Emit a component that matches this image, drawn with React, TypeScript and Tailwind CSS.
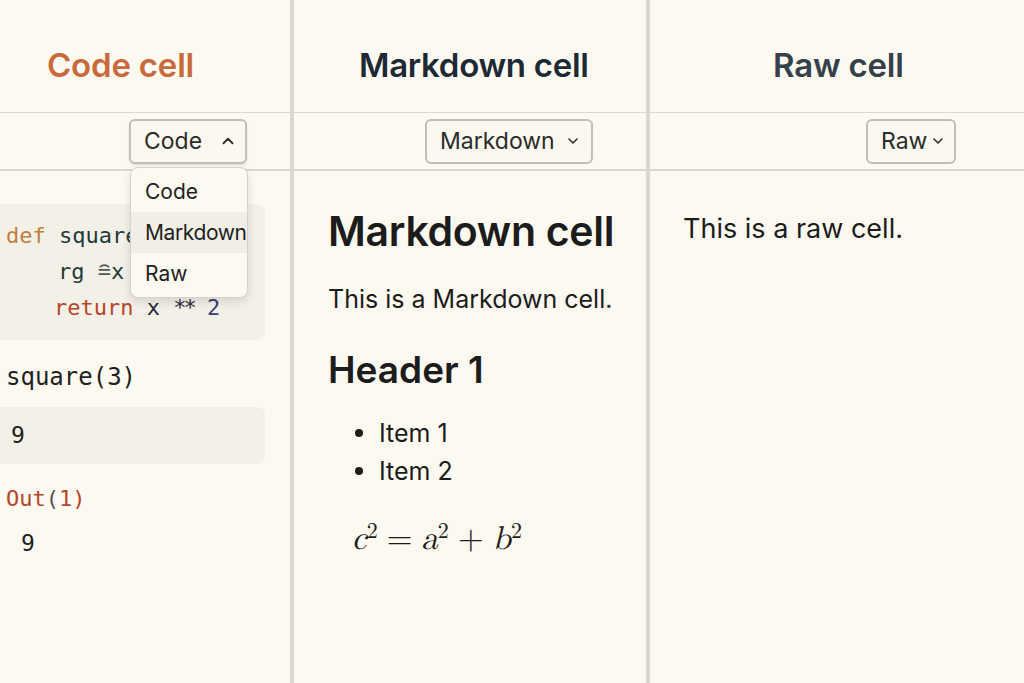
import { ChevronDown, ChevronUp } from "lucide-react";

const SANS = { fontFamily: "Inter, 'Noto Sans', sans-serif" };
const MONO = { fontFamily: "'DejaVu Sans Mono', 'Liberation Mono', monospace" };
const SERIF = { fontFamily: "'Latin Modern Math', 'DejaVu Serif', 'Liberation Serif', serif" };

const MENU_ITEMS = ["Code", "Markdown", "Raw"];

const CodeColumn = () => {
  return (
    <div className="relative flex h-full w-[294px] shrink-0 flex-col border-r-[4px] border-[#dcd8d1]">
      <div className="flex h-[113px] shrink-0 items-center border-b border-[#dcd8d0] pl-[47px] pt-[19px]">
        <h2 className="text-[33px] font-semibold tracking-[-0.2px] text-[#c86a3c]">Code cell</h2>
      </div>
      <div className="relative flex h-[58px] shrink-0 items-center justify-end border-b-2 border-[#dcd8d0] pr-[43px]">
        <button className="flex h-[45px] w-[118px] items-center justify-between rounded-md border-2 border-[#c2beb6] bg-[#fbf8ef] pl-[13px] pr-[8px] text-[23px] text-[#2b2b2b] shadow-sm">
          Code
          <ChevronUp className="h-[18px] w-[18px] text-[#333]" strokeWidth={2.5} />
        </button>
        <div className="absolute left-[130px] top-[54px] z-10 flex w-[118px] flex-col overflow-hidden rounded-lg border border-[#d6d2ca] bg-[#fcf9f1] py-[3px] shadow-[0_4px_10px_rgba(0,0,0,0.12)]">
          {MENU_ITEMS.map((item) => (
            <div
              key={item}
              className={`flex h-[41px] items-center pl-[14px] text-[21px] text-[#1f1f1f] ${
                item === "Markdown" ? "bg-[#f1eee6] tracking-[-0.4px]" : ""
              }`}
            >
              {item}
            </div>
          ))}
        </div>
      </div>
      <div className="flex flex-col pt-[33px] text-[22px]" style={MONO}>
        <div className="w-[265px] rounded-r-lg bg-[#f3f0e8] py-[14px] pl-[6px] leading-[36px]">
          <div className="whitespace-pre">
            <span className="text-[#c07d3c]">def</span> <span className="text-[#1f3b3a]">square</span>
          </div>
          <div className="whitespace-pre pl-[52px] text-[#1f3b3a]">
            {"rg "}
            <span className="text-[#555]">≘</span>x
          </div>
          <div className="whitespace-pre pl-[48px]">
            <span className="text-[#b5452b]">return</span> <span className="text-[#2a2838]">x</span>{" "}
            <span className="tracking-[-3px] text-[#2a2838]">**</span> <span className="text-[#3c3d78]">2</span>
          </div>
        </div>
        <div className="mt-[18px] pl-[6px] text-[24px] leading-[38px] text-[#1f1f1f]">square(3)</div>
        <div className="mt-[11px] flex h-[57px] w-[265px] items-center rounded-r-lg bg-[#f3f0e8] pl-[11px] text-[23px] text-[#1f1f1f]">
          9
        </div>
        <div className="mt-[18px] pl-[6px] leading-[34px]">
          <span className="text-[#b5452b]">Out</span>
          <span className="text-[#555]">(</span>
          <span className="text-[#b5452b]">1)</span>
        </div>
        <div className="mt-[10px] pl-[21px] text-[23px] leading-[34px] text-[#1f1f1f]">9</div>
      </div>
    </div>
  );
};

const MarkdownColumn = () => {
  return (
    <div className="flex h-full w-[356px] shrink-0 flex-col border-r-[4px] border-[#dcd8d1]">
      <div className="flex h-[113px] shrink-0 items-center border-b border-[#dcd8d0] pl-[65px] pt-[19px]">
        <h2 className="text-[33px] font-semibold tracking-[-0.3px] text-[#1d2935]">Markdown cell</h2>
      </div>
      <div className="flex h-[58px] shrink-0 items-center justify-end border-b-2 border-[#dcd8d0] pr-[53px]">
        <button className="flex h-[45px] w-[168px] items-center justify-between rounded-md border-2 border-[#c2beb6] bg-[#fbf8ef] pl-[13px] pr-[10px] text-[23px] text-[#2b2b2b]">
          Markdown
          <ChevronDown className="h-[16px] w-[16px] text-[#333]" strokeWidth={2.5} />
        </button>
      </div>
      <div className="flex flex-col pl-[34px] pt-[33px] text-[#1c1c1c]">
        <h1 className="text-[41px] font-semibold leading-[54px] tracking-[-0.3px]">Markdown cell</h1>
        <p className="mt-[24px] text-[25px] leading-[34px]">This is a Markdown cell.</p>
        <h3 className="mt-[32px] text-[37px] font-semibold leading-[44px]">Header 1</h3>
        <ul className="mt-[22px] flex flex-col pl-[27px] text-[25px] leading-[38px]">
          {["Item 1", "Item 2"].map((item) => (
            <li key={item} className="flex items-center">
              <span className="mr-[16px] h-[8px] w-[8px] rounded-full bg-[#1c1c1c]" />
              {item}
            </li>
          ))}
        </ul>
        <div className="mt-[29px] pl-[24px] text-[33px] leading-[40px] text-[#1c1c1c]" style={SERIF}>
          <i>c</i>
          <sup className="text-[22px]">2</sup>
          <span className="mx-[9px]">=</span>
          <i>a</i>
          <sup className="text-[22px]">2</sup>
          <span className="mx-[9px]">+</span>
          <i>b</i>
          <sup className="text-[22px]">2</sup>
        </div>
      </div>
    </div>
  );
};

const RawColumn = () => {
  return (
    <div className="flex h-full flex-1 flex-col">
      <div className="flex h-[113px] shrink-0 items-center border-b border-[#dcd8d0] pl-[123px] pt-[19px]">
        <h2 className="text-[33px] font-semibold tracking-[-0.2px] text-[#36404b]">Raw cell</h2>
      </div>
      <div className="flex h-[58px] shrink-0 items-center justify-end border-b-2 border-[#dcd8d0] pr-[68px]">
        <button className="flex h-[45px] w-[90px] items-center justify-between rounded-md border-2 border-[#c2beb6] bg-[#fbf8ef] pl-[13px] pr-[8px] text-[23px] text-[#2b2b2b]">
          Raw
          <ChevronDown className="h-[16px] w-[16px] text-[#333]" strokeWidth={2.5} />
        </button>
      </div>
      <div className="pl-[33px] pt-[40px] text-[27px] leading-[36px] text-[#1c1c1c]">This is a raw cell.</div>
    </div>
  );
};

const App = () => {
  return (
    <div className="flex h-[683px] w-[1024px] overflow-hidden bg-[#fcf9f0]" style={SANS}>
      <CodeColumn />
      <MarkdownColumn />
      <RawColumn />
    </div>
  );
};

export default App;
